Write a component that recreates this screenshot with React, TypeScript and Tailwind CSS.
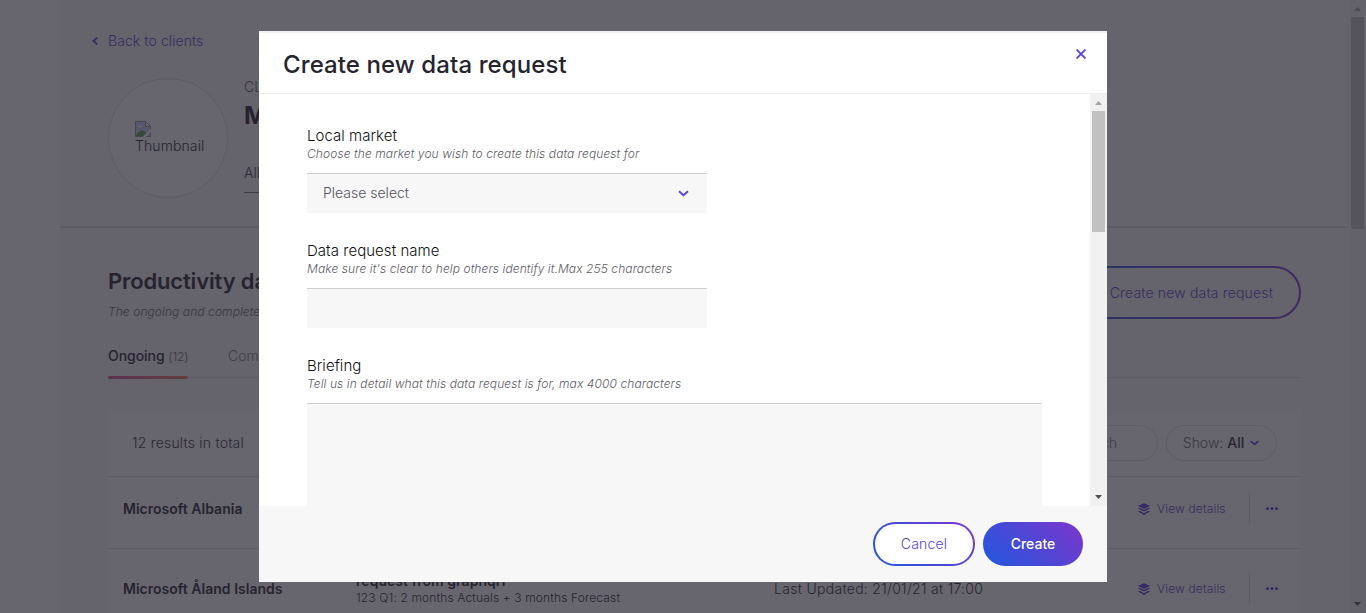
import React from "react";

function Chevron({ className, d = "M1 1.2 5.5 5.2 10 1.2" }: { className?: string; d?: string }) {
  return (
    <svg className={className} viewBox="0 0 11 7" fill="none" stroke="currentColor" strokeWidth="2">
      <path d={d} />
    </svg>
  );
}

function BrokenImage() {
  return (
    <svg className="h-4 w-4" viewBox="0 0 16 16">
      <path d="M0.5 0.5h10l5 5v10h-15z" fill="#c3d3f5" stroke="#8f8f8f" />
      <path d="M10.5 0.5v5h5z" fill="#fff" stroke="#8f8f8f" />
      <path d="M3 6.2c0-1.4 1.6-2 2.3-1 1.2-.5 2.2 0 2.2 1z" fill="#fff" />
      <path d="M1 15c1-3 3.500-5.500 6-5.500s3 1.200 4 2.500L8 15z" fill="#4ea53c" />
      <path d="M16 7.500 7.500 16H11l5-5z" fill="#fff" />
    </svg>
  );
}

function Layers() {
  return (
    <svg className="h-3 w-3" viewBox="0 0 12 12" fill="#5f3fd6">
      <path d="M6 0 12 2.900 6 5.800 0 2.900z" />
      <path d="M0 5.400 1.600 4.700 6 6.800l4.400-2.100L12 5.400 6 8.400z" />
      <path d="M0 8.600 1.600 7.700 6 9.900l4.400-2.200L12 8.600 6 11.900z" />
    </svg>
  );
}

function Row({ name, className, children }: { name: string; className: string; children?: React.ReactNode }) {
  return (
    <div className={`flex border-t border-[#dedee0] ${className}`}>
      <div className="w-[232px] pl-[15px] pt-[5px] text-sm font-semibold leading-6 tracking-[0.02px]">{name}</div>
      <div className="flex-1">{children}</div>
      <div className="flex h-[33px] items-center text-[#5f3fd6]">
        <Layers />
        <span className="ml-[7px] w-[92px] text-xs tracking-[0.14px]">View details</span>
        <span className="h-[33px] w-px bg-[#dedee0]" />
        <svg className="ml-4 mr-[23px] h-[3px] w-3" viewBox="0 0 12 3" fill="currentColor">
          <circle cx="1.500" cy="1.500" r="1.500" />
          <circle cx="6" cy="1.500" r="1.500" />
          <circle cx="10.500" cy="1.500" r="1.500" />
        </svg>
      </div>
    </div>
  );
}

function Page() {
  return (
    <div className="flex h-[613px] w-[1366px] font-light">
      <aside className="w-[60px] shrink-0 bg-white" />
      <main className="w-[1289px] shrink-0 bg-[#f7f7f8]">
        <header className="h-[228px] border-b-2 border-[#dedee0] px-[32px] pt-[29px]">
          <div className="flex h-6 items-center text-[#5f3fd6]">
            <svg className="h-2 w-[6px]" viewBox="0 0 6 8" fill="none" stroke="currentColor" strokeWidth="1.700">
              <path d="M5.200.500 1.400 4l3.800 3.500" />
            </svg>
            <span className="ml-[10px] text-sm tracking-[0.08px]">Back to clients</span>
          </div>
          <div className="ml-4 mt-[25px] flex">
            <div className="flex h-[120px] w-[120px] flex-col items-start rounded-full border border-[#dedee0] bg-white pl-[26px] pt-[42px]">
              <BrokenImage />
              <span className="mt-px text-sm leading-4 tracking-[0.1px]">Thumbnail</span>
            </div>
            <div className="ml-4 w-[60px] overflow-hidden whitespace-nowrap">
              <div className="text-sm leading-[18px] text-[#66656f]">CLIENT</div>
              <div className="mt-1 text-2xl font-bold leading-8">Micro</div>
              <div className="mt-[30px] h-[31px] border-b border-[#77767f] text-sm leading-[22px] text-[#44434e]">All</div>
            </div>
          </div>
        </header>
        <section className="px-12 pt-[37px]">
          <div className="flex items-start justify-between">
            <div>
              <h2 className="text-[22px] font-semibold leading-8 tracking-[-0.15px]">Productivity data</h2>
              <p className="mt-[5px] text-xs italic leading-5 tracking-[0.08px] text-[#66656f]">The ongoing and completed</p>
            </div>
            <div className="mt-px h-[53px] rounded-full bg-linear-to-r from-[#2a54dd] to-[#7a3ad0] p-[2px]">
              <div className="flex h-full items-center rounded-full bg-[#f7f7f8] px-[26px] text-sm tracking-[0.16px] text-[#5f3fd6]">
                Create new data request
              </div>
            </div>
          </div>
          <div className="mt-[21px] flex h-[35px] border-b border-[#dedee0] text-sm leading-[26px]">
            <div className="flex h-9 w-20 flex-col justify-between">
              <span className="whitespace-nowrap font-medium tracking-[-0.05px]">
                Ongoing <span className="text-xs font-light text-[#66656f]">(12)</span>
              </span>
              <span className="h-[3px] shrink-0 rounded-sm bg-linear-to-r from-[#d8509f] to-[#f57a6a]" />
            </div>
            <span className="ml-10 text-[#7a7983]">Completed</span>
          </div>
          <div className="mt-[31px] bg-white">
            <div className="flex h-[67px] items-center pl-6 pr-6 pt-px text-sm">
              <span className="flex-1 tracking-[0.2px] text-[#33313c]">12 results in total</span>
              <span className="flex h-9 w-[240px] items-center justify-end rounded-full border border-[#dedee0] pr-10 text-[#7a7983]">Search</span>
              <span className="ml-2 flex h-9 w-[111px] items-center justify-center rounded-full border border-[#dedee0] text-[#66656f]">
                Show:&nbsp;<span className="font-medium text-[#26242f]">All</span>
                <Chevron className="ml-[5px] h-[6px] w-[11px] text-[#5f3fd6]" />
              </span>
            </div>
            <Row name="Microsoft Albania" className="h-[72px] pt-[15px]" />
            <Row name="Microsoft Åland Islands" className="h-[65px] pt-[23px]">
              <div className="mt-px flex pl-[16px]">
                <div className="w-[418px]">
                  <div className="text-sm font-semibold leading-4 tracking-[0.05px]">request from graphqrl</div>
                  <div className="text-xs leading-[17px] tracking-[0.14px]">123 Q1: 2 months Actuals + 3 months Forecast</div>
                </div>
                <span className="pt-1 text-sm leading-6 tracking-[0.29px]">Last Updated: 21/01/21 at 17:00</span>
              </div>
            </Row>
          </div>
        </section>
      </main>
      <div className="flex w-[17px] shrink-0 flex-col items-center bg-[#f1f1f1]">
        <svg className="mt-[7px] h-1 w-[7px]" viewBox="0 0 7 4" fill="#a3a3a3"><path d="M3.500 0 7 4H0z" /></svg>
        <div className="mt-[6px] h-[212px] w-[13px] bg-[#c1c1c1]" />
        <svg className="mb-[7px] mt-auto h-1 w-[7px]" viewBox="0 0 7 4" fill="#505050"><path d="M0 0h7L3.500 4z" /></svg>
      </div>
    </div>
  );
}

function Field({ label, hint, children }: { label: string; hint: string; children: React.ReactNode }) {
  return (
    <div className="h-[115px]">
      <div className="text-[15px] leading-[18px] tracking-[0.04px] text-[#111]">{label}</div>
      <div className="mb-[10px] text-xs italic leading-[18px] tracking-[0.09px] text-[#5c5b66]">{hint}</div>
      {children}
    </div>
  );
}

function Dialog() {
  return (
    <div className="flex h-[551px] w-[848px] flex-col border-t-2 border-[#f1f0f4] bg-white font-light">
      <div className="flex h-[61px] shrink-0 justify-between border-b border-[#eeedf0] pl-6 pr-[21px]">
        <h1 className="pt-[14px] text-2xl font-medium leading-9 tracking-[0.1px]">Create new data request</h1>
        <svg className="mt-4 h-[10px] w-[10px]" viewBox="0 0 10 10" stroke="#5b44d8" strokeWidth="1.900">
          <path d="M.500.500l9 9M9.500.500l-9 9" />
        </svg>
      </div>
      <div className="flex h-[412px] shrink-0">
        <div className="flex-1 overflow-hidden pl-12 pr-12 pt-[33px]">
          <Field label="Local market" hint="Choose the market you wish to create this data request for">
            <div className="flex h-10 w-[400px] items-center justify-between border-t border-[#cfcfd1] bg-[#f7f7f7] pb-px pl-4 pr-[18.500px] text-sm text-[#55545f]">
              Please select
              <Chevron className="h-[7px] w-[11px] text-[#5b44d8]" />
            </div>
          </Field>
          <Field label="Data request name" hint="Make sure it's clear to help others identify it.Max 255 characters">
            <div className="h-10 w-[400px] border-t border-[#cfcfd1] bg-[#f7f7f7]" />
          </Field>
          <Field label="Briefing" hint="Tell us in detail what this data request is for, max 4000 characters">
            <div className="h-[160px] w-full border-t border-[#cfcfd1] bg-[#f7f7f7]" />
          </Field>
        </div>
        <div className="flex w-[17px] flex-col items-center bg-[#f1f1f1]">
          <svg className="mt-[7px] h-1 w-[7px]" viewBox="0 0 7 4" fill="#a3a3a3"><path d="M3.500 0 7 4H0z" /></svg>
          <div className="mt-[6px] h-[121px] w-[13px] bg-[#c1c1c1]" />
          <svg className="mb-[7px] mt-auto h-1 w-[7px]" viewBox="0 0 7 4" fill="#505050"><path d="M0 0h7L3.500 4z" /></svg>
        </div>
      </div>
      <div className="flex h-[76px] items-center justify-end gap-2 bg-[#f7f7f8] pr-6 text-sm">
        <div className="h-11 w-[102px] rounded-full bg-linear-[45deg] from-[#2a54dd] from-15% to-[#7339cd] to-90% p-[2px]">
          <div className="flex h-full items-center justify-center rounded-full bg-white tracking-[0.2px] text-[#5b3fd8]">Cancel</div>
        </div>
        <div className="flex h-11 w-[100px] items-center justify-center rounded-full bg-linear-[45deg] from-[#2a54dd] from-10% to-[#7339cd] to-90% font-medium text-white">Create</div>
      </div>
    </div>
  );
}

export default function App() {
  return (
    <div className="relative h-[613px] w-[1366px] overflow-hidden font-['Inter',sans-serif] text-[#26242f]">
      <Page />
      <div className="absolute inset-0 flex items-start justify-center bg-[#26242f]/70 pt-[31px]">
        <Dialog />
      </div>
    </div>
  );
}
